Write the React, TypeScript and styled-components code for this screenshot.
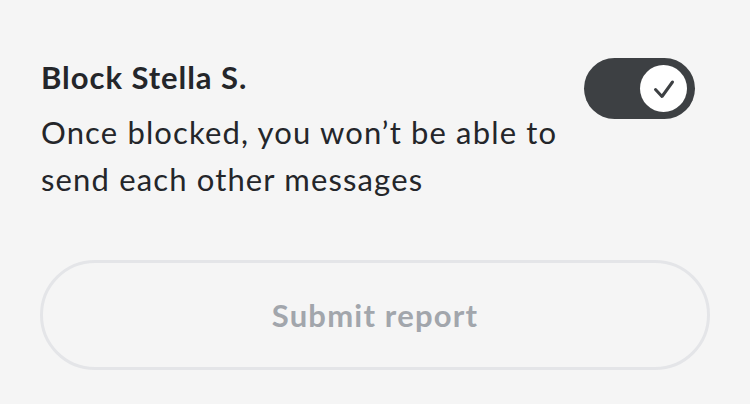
import React from 'react'
import styled, { createGlobalStyle } from 'styled-components'

const GlobalStyle = createGlobalStyle`
  html, body {
    margin: 0;
    padding: 0;
    background: #f5f5f5;
  }
  body {
    font-family: Lato, 'Noto Sans', sans-serif;
    color: #24262a;
  }
`

const Container = styled.div`
  width: 750px;
  height: 404px;
  box-sizing: border-box;
  padding: 58px 40px 0 40px;
  background: #f5f5f5;
`

const Row = styled.div`
  display: flex;
  flex-direction: row;
  justify-content: space-between;
  align-items: flex-start;
  padding-right: 15px;
`

const Texts = styled.div`
  display: flex;
  flex-direction: column;
  padding: 1px 0 0 1px;
`

const Title = styled.div`
  font-size: 31px;
  font-weight: 700;
  letter-spacing: 0.95px;
  line-height: 36px;
  color: #24262a;
`

const Description = styled.div`
  font-size: 31px;
  font-weight: 400;
  letter-spacing: 1.15px;
  line-height: 47px;
  margin-top: 14px;
  color: #24262a;
  width: 530px;
`

const Toggle = styled.button<{ on: boolean }>`
  width: 111px;
  height: 61px;
  border-radius: 31px;
  border: none;
  padding: 0 8px;
  background: ${p => (p.on ? '#3d4043' : '#d0d2d6')};
  display: flex;
  align-items: center;
  justify-content: ${p => (p.on ? 'flex-end' : 'flex-start')};
  cursor: pointer;
`

const Knob = styled.span`
  width: 47px;
  height: 47px;
  border-radius: 50%;
  background: #ffffff;
  display: flex;
  align-items: center;
  justify-content: center;
`

const SubmitButton = styled.button`
  margin-top: 57px;
  width: 670px;
  height: 110px;
  border-radius: 55px;
  border: 3px solid #e4e5e8;
  background: transparent;
  display: flex;
  align-items: center;
  justify-content: center;
  font-family: Lato, 'Noto Sans', sans-serif;
  font-size: 31px;
  font-weight: 700;
  letter-spacing: 1.2px;
  color: #a2a6ac;
`

const App = () => {
  return (
    <>
      <GlobalStyle />
      <Container>
        <Row>
          <Texts>
            <Title>Block Stella S.</Title>
            <Description>Once blocked, you won’t be able to send each other messages</Description>
          </Texts>
          <Toggle on={true}>
            <Knob>
              <svg width="47" height="47" viewBox="0 0 47 47" fill="none">
                <path d="M15.5 24.5l6.5 7L32.5 17" stroke="#3d4043" strokeWidth="3" strokeLinecap="round" strokeLinejoin="round" />
              </svg>
            </Knob>
          </Toggle>
        </Row>
        <SubmitButton disabled>Submit report</SubmitButton>
      </Container>
    </>
  )
}

export default App
